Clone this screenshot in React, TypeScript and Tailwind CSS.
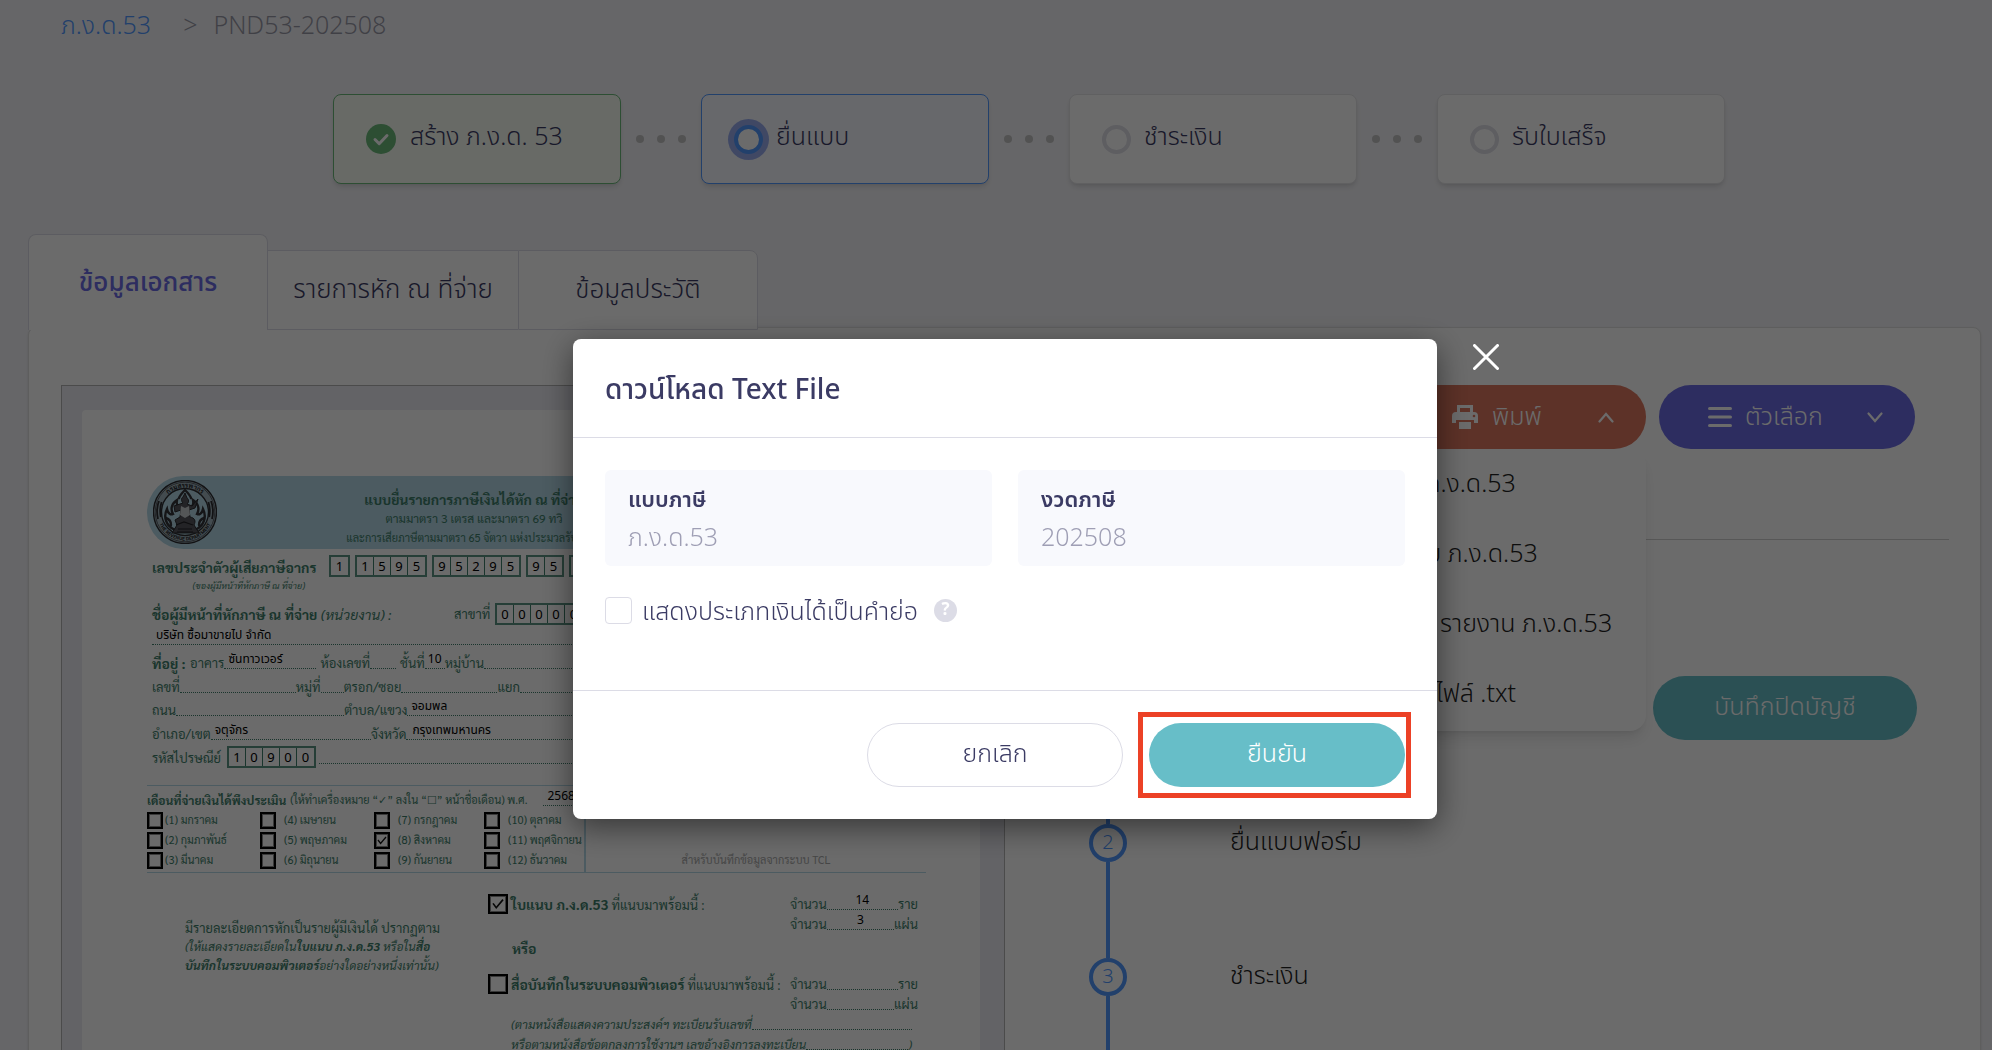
import { ReactNode } from "react";

const steps = [
  { label: "สร้าง ภ.ง.ด. 53", state: "done" },
  { label: "ยื่นแบบ", state: "active" },
  { label: "ชำระเงิน", state: "todo" },
  { label: "รับใบเสร็จ", state: "todo" },
];

const stepStyles: Record<string, string> = {
  done: "border-[#6bb97a] bg-[#f7fcf4]",
  active: "border-[#5198ff] bg-[#f5f8ff]",
  todo: "border-[#e4e4e8] bg-white",
};

const printItems = [
  "แบบ ภ.ง.ด.53",
  "ใบแนบ ภ.ง.ด.53",
  "Excel รายงาน ภ.ง.ด.53",
  "บันทึกไฟล์ .txt",
];

const timeline = ["บันทึกปิดบัญชี", "ยื่นแบบฟอร์ม", "ชำระเงิน"];

const months = [
  ["มกราคม", "กุมภาพันธ์", "มีนาคม"],
  ["เมษายน", "พฤษภาคม", "มิถุนายน"],
  ["กรกฎาคม", "สิงหาคม", "กันยายน"],
  ["ตุลาคม", "พฤศจิกายน", "ธันวาคม"],
];

const monthColumns = ["w-[113px]", "w-[114px]", "w-[110px]", "w-[100px]"];
const monthGaps = ["gap-[2px]", "gap-2", "gap-2", "gap-2"];

function StepIcon({ state }: { state: string }) {
  if (state === "done") {
    return (
      <svg className="ml-8 mr-[14px] size-[30px]" viewBox="0 0 30 30">
        <circle cx="15" cy="15" r="15" fill="#6bb97a" />
        <path
          d="M9 15.5l4.2 4.2L21 11.5"
          fill="none"
          stroke="#fff"
          strokeWidth="3"
          strokeLinecap="round"
          strokeLinejoin="round"
        />
      </svg>
    );
  }
  if (state === "active") {
    return (
      <span className="ml-[26px] mr-[7px] flex size-[41px] items-center justify-center rounded-full bg-[#99acef]">
        <span className="size-[29px] rounded-full border-4 border-[#5198ff] bg-white" />
      </span>
    );
  }
  return (
    <span className="ml-8 mr-[13px] size-[29px] rounded-full border-4 border-[#dfdfe8]" />
  );
}

function Steps() {
  return (
    <div className="flex justify-center pl-[66px] pt-11">
      {steps.map((step, index) => (
        <div key={step.label} className="flex items-center">
          {index > 0 && (
            <div className="flex w-20 justify-center gap-[13px]">
              <span className="size-2 rounded-full bg-[#c3c3c3]" />
              <span className="size-2 rounded-full bg-[#c3c3c3]" />
              <span className="size-2 rounded-full bg-[#c3c3c3]" />
            </div>
          )}
          <div
            className={`flex h-[90px] w-72 items-center rounded-lg border text-[25px] leading-8 text-[#3b3b64] shadow-md ${stepStyles[step.state]}`}
          >
            <StepIcon state={step.state} />
            <span className="pb-1">{step.label}</span>
          </div>
        </div>
      ))}
    </div>
  );
}

function Tabs() {
  return (
    <div className="flex items-end pt-[50px]" role="tablist">
      <button
        role="tab"
        aria-selected="true"
        className="h-24 w-60 rounded-t-lg border border-b-0 border-[#dcdce6] bg-white pt-0.5 text-[26px] font-medium text-[#6b6be4]"
      >
        ข้อมูลเอกสาร
      </button>
      <button
        role="tab"
        aria-selected="false"
        className="h-20 w-[250px] border-y border-[#dcdce6] bg-white text-[26px] text-[#3b3b64]"
      >
        รายการหัก ณ ที่จ่าย
      </button>
      <button
        role="tab"
        aria-selected="false"
        className="h-20 w-60 rounded-tr-lg border border-[#dcdce6] bg-white text-[26px] text-[#3b3b64]"
      >
        ข้อมูลประวัติ
      </button>
    </div>
  );
}

function Emblem() {
  return (
    <svg className="size-16" viewBox="0 0 64 64">
      <defs>
        <path id="ring-top" d="M7.5 32a24.5 24.5 0 0 1 49 0" />
        <path id="ring-bottom" d="M3.5 32a28.5 28.5 0 0 0 57 0" />
      </defs>
      <circle cx="32" cy="32" r="31.5" fill="#9fb4bd" stroke="#2c2c30" strokeWidth="1.4" />
      <circle cx="32" cy="32" r="29.8" fill="none" stroke="#44444a" strokeWidth="0.8" />
      <circle cx="32" cy="32" r="23.5" fill="#b5d9e7" stroke="#2c2c30" strokeWidth="1.4" />
      <g fill="#222226" fontSize="6.5" fontWeight="700" textAnchor="middle">
        <text>
          <textPath href="#ring-top" startOffset="50%">กรมสรรพากร</textPath>
        </text>
        <text fontSize="5">
          <textPath href="#ring-bottom" startOffset="50%">THE REVENUE DEPARTMENT</textPath>
        </text>
      </g>
      <g fill="none" stroke="#2c2c30" strokeWidth="1.8">
        <path d="M6 21c-2 5-2.4 12-1 18M8.6 22c-1.6 5-1.8 10-.8 15" />
        <path d="M58 21c2 5 2.4 12 1 18M55.4 22c1.6 5 1.8 10 .8 15" />
      </g>
      <g fill="none" stroke="#333338" strokeWidth="2.4" strokeLinecap="round">
        <path d="M22 50c-9-4-12-13-8-21 1 5 4 6 6 5-3-5-1-11 4-14-1 5 1 7 3 7" />
        <path d="M42 50c9-4 12-13 8-21-1 5-4 6-6 5 3-5 1-11-4-14 1 5-1 7-3 7" />
        <path d="M13 38c3 1 5 3 5 7M51 38c-3 1-5 3-5 7" />
        <path d="M26 18c1-3 3-5 6-8 3 3 5 5 6 8" />
      </g>
      <path
        d="M32 13l2 5c2 1 2 5 0 6l5 2 6-7-3 9-6 2 1 7c5 1 6 4 4 8l5 8H19l5-8-2-5 5-3 1-7-6 2-1-6 6-2 3-1c-2-2-2-5 0-6z"
        fill="#55555c"
        stroke="#29292d"
      />
      <path d="M28 26l4 2 4-2 1 9-5 3-5-3z" fill="#c9cdd0" />
      <path d="M23 45l8-3 9 3M25 49h14M24 52h16" stroke="#222226" strokeWidth="1.2" fill="none" />
    </svg>
  );
}

function Cells({ value }: { value: string }) {
  return (
    <span className="flex h-[22px] divide-x divide-[#3f7f6c] border-2 border-[#5c9484] font-['Noto_Sans'] text-[13px] leading-[18px] text-black">
      {value.split("").map((digit, index) => (
        <span key={index} className="w-[17px] text-center">
          {digit}
        </span>
      ))}
    </span>
  );
}

function Blank({ className, children }: { className: string; children?: ReactNode }) {
  return (
    <span
      className={`mb-1 h-4 whitespace-nowrap border-b border-dotted border-[#3f7f6c] font-['Noto_Sans_Thai'] text-[12px] leading-3 text-black ${className}`}
    >
      {children}
    </span>
  );
}

function Tick({ label, size, checked }: { label: string; size: string; checked?: boolean }) {
  return (
    <span className="relative flex h-fit shrink-0">
      <input
        type="checkbox"
        aria-label={label}
        checked={checked ?? false}
        readOnly
        className={`appearance-none border-2 border-black outline outline-1 -outline-offset-[3px] outline-[#8b8b8b] ${size}`}
      />
      {checked && (
        <svg className="absolute inset-0 size-full" viewBox="0 0 16 16">
          <path d="M4 7.5l2.6 3.5L12 4.5" fill="none" stroke="#111" strokeWidth="1.3" />
        </svg>
      )}
    </span>
  );
}

function Amounts({ rows, sheets }: { rows?: string; sheets?: string }) {
  return (
    <div className="w-[128px] text-[13px] leading-5">
      <div className="flex items-end">
        จำนวน
        <Blank className="flex-1 text-center">{rows}</Blank>
        ราย
      </div>
      <div className="flex items-end">
        จำนวน
        <Blank className="flex-1 text-center">{sheets}</Blank>
        แผ่น
      </div>
    </div>
  );
}

function TaxForm() {
  return (
    <div className="ml-5 mr-6 mt-6 rounded-t bg-white pl-[65px] pr-[54px] pt-[66px] font-['Sarabun','Noto_Sans_Thai_Looped',sans-serif] text-[13px] font-normal text-[#3f7f6c]">
      <div className="flex h-[73px] rounded-full bg-[#b5d9e7] pl-[6px] pt-1">
        <Emblem />
        <div className="w-[514px] whitespace-nowrap pt-2.5 text-center text-[12px] leading-[19px]">
          <p className="text-[14px] font-bold">แบบยื่นรายการภาษีเงินได้หัก ณ ที่จ่าย</p>
          <p>ตามมาตรา 3 เตรส และมาตรา 69 ทวิ</p>
          <p className="text-[11px]">และการเสียภาษีตามมาตรา 65 จัตวา แห่งประมวลรัษฎากร</p>
        </div>
      </div>

      <div className="flex pl-[5px] pt-[6px]">
        <div className="w-[177px] whitespace-nowrap">
          <p className="text-[14px] font-bold leading-6">เลขประจำตัวผู้เสียภาษีอากร</p>
          <p className="pr-6 text-right text-[9px] italic leading-3">(ของผู้มีหน้าที่หักภาษี ณ ที่จ่าย)</p>
        </div>
        <div className="flex gap-[5px]">
          <Cells value="1" />
          <Cells value="1595" />
          <Cells value="95295" />
          <Cells value="95" />
          <Cells value="9" />
        </div>
      </div>

      <div className="mt-3 flex h-[22px] items-center whitespace-nowrap pl-[5px]">
        <p className="w-[302px] text-[14px]">
          <b>ชื่อผู้มีหน้าที่หักภาษี ณ ที่จ่าย</b> <i>(หน่วยงาน) :</i>
        </p>
        <p className="w-[41px]">สาขาที่</p>
        <Cells value="00000" />
      </div>
      <div className="flex h-6 items-end pl-[5px]">
        <Blank className="flex-1 pl-1">บริษัท ซื้อมาขายไป จำกัด</Blank>
      </div>
      <div className="flex h-6 items-end whitespace-nowrap pl-[5px] leading-5">
        <b className="w-[38px] text-[14px]">ที่อยู่ :</b>
        อาคาร
        <Blank className="mr-1 w-[92px] pl-1">ซันทาวเวอร์</Blank>
        ห้องเลขที่
        <Blank className="mr-1 w-[26px]" />
        ชั้นที่
        <Blank className="w-[20px] text-center">10</Blank>
        หมู่บ้าน
        <Blank className="flex-1" />
      </div>
      <div className="flex h-6 items-end whitespace-nowrap pl-[5px] leading-5">
        เลขที่
        <Blank className="w-[116px]" />
        หมู่ที่
        <Blank className="w-[23px]" />
        ตรอก/ซอย
        <Blank className="w-[96px]" />
        แยก
        <Blank className="flex-1" />
      </div>
      <div className="flex h-[23px] items-end whitespace-nowrap pl-[5px] leading-5">
        ถนน
        <Blank className="w-[168px]" />
        ตำบล/แขวง
        <Blank className="flex-1 pl-1">จอมพล</Blank>
      </div>
      <div className="flex h-6 items-end whitespace-nowrap pl-[5px] leading-5">
        อำเภอ/เขต
        <Blank className="w-[160px] pl-1">จตุจักร</Blank>
        จังหวัด
        <Blank className="flex-1 pl-1.5">กรุงเทพมหานคร</Blank>
      </div>
      <div className="flex h-6 items-end whitespace-nowrap pl-[5px] leading-5">
        <span className="w-[75px]">รหัสไปรษณีย์</span>
        <Cells value="10900" />
        <Blank className="ml-[3px] flex-1" />
      </div>

      <div className="mt-[17px] flex border-y border-[#b5d9e7]">
        <div className="w-[439px] border-r-2 border-[#b5d9e7]">
          <p className="flex h-6 items-end whitespace-nowrap text-[11px] leading-5">
            <b className="text-[12px]">เดือนที่จ่ายเงินได้พึงประเมิน</b>
            <span className="pl-1">(ให้ทำเครื่องหมาย “✓” ลงใน “☐” หน้าชื่อเดือน) พ.ศ.</span>
            <Blank className="ml-4 flex-1 pl-1">2568</Blank>
          </p>
          <div className="flex pb-[2px]">
            {months.map((column, col) => (
              <div key={col} className={monthColumns[col]}>
                {column.map((month, row) => (
                  <div key={month} className={`flex h-5 items-center whitespace-nowrap text-[11px] ${monthGaps[col]}`}>
                    <Tick label={month} size="h-[17px] w-4" checked={month === "สิงหาคม"} />
                    <span>
                      ({col * 3 + row + 1}) {month}
                    </span>
                  </div>
                ))}
              </div>
            ))}
          </div>
        </div>
        <p className="flex-1 self-end pb-1 text-center text-[11px] text-[#a8a8a8]">
          สำหรับบันทึกข้อมูลจากระบบ TCL
        </p>
      </div>

      <div className="flex pt-[21px]">
        <div className="w-[341px] whitespace-nowrap pl-[38px] pt-6 leading-[19px]">
          <p>มีรายละเอียดการหักเป็นรายผู้มีเงินได้ ปรากฏตาม</p>
          <p className="text-[12px] italic">
            (ให้แสดงรายละเอียดใน<b>ใบแนบ ภ.ง.ด.53</b> หรือใน<b>สื่อ</b>
          </p>
          <p className="text-[12px] italic">
            <b>บันทึกในระบบคอมพิวเตอร์</b>อย่างใดอย่างหนึ่งเท่านั้น)
          </p>
        </div>
        <div className="flex-1 whitespace-nowrap">
          <div className="flex">
            <Tick label="ใบแนบ ภ.ง.ด.53" size="size-5" checked />
            <p className="w-[282px] pl-[3px] leading-5">
              <b className="text-[14px]">ใบแนบ ภ.ง.ด.53</b> ที่แนบมาพร้อมนี้ :
            </p>
            <Amounts rows="14" sheets="3" />
          </div>
          <p className="h-10 pl-6 pt-1 text-[14px] font-bold">หรือ</p>
          <div className="flex">
            <Tick label="สื่อบันทึกในระบบคอมพิวเตอร์" size="size-5" />
            <p className="w-[282px] pl-[3px] leading-5">
              <b className="text-[14px]">สื่อบันทึกในระบบคอมพิวเตอร์</b> ที่แนบมาพร้อมนี้ :
            </p>
            <Amounts />
          </div>
          <div className="pl-[23px] pr-[14px] text-[12px] italic leading-5">
            <p className="flex items-end">
              (ตามหนังสือแสดงความประสงค์ฯ ทะเบียนรับเลขที่
              <Blank className="flex-1" />
            </p>
            <p className="flex items-end">
              หรือตามหนังสือข้อตกลงการใช้งานฯ เลขอ้างอิงการลงทะเบียน
              <Blank className="flex-1" />)
            </p>
          </div>
        </div>
      </div>
    </div>
  );
}

function PrintMenu() {
  return (
    <div className="relative">
      <button className="flex h-16 w-64 items-center rounded-full bg-[#dd775f] pl-[62px] text-[25px] text-white">
        <svg className="mr-[14px] h-6 w-[26px]" viewBox="0 0 26 24" fill="#fff">
          <path d="M5 0h16v7h-3V3H8v4H5zM4 7h18a4 4 0 0 1 4 4v7h-4v-3H4v3H0v-7a4 4 0 0 1 4-4zM7 17h12v7H7z" />
          <circle cx="22" cy="11" r="1.3" fill="#dd775f" />
        </svg>
        <span className="pt-0.5">พิมพ์</span>
        <svg className="ml-auto mr-8 h-[11px] w-4" viewBox="0 0 16 11">
          <path d="M1.5 9.5L8 2l6.5 7.5" fill="none" stroke="#fff" strokeWidth="2.2" strokeLinecap="round" />
        </svg>
      </button>
      <div className="absolute right-0 top-full flex h-[282px] w-[304px] flex-col rounded-2xl bg-white pt-px shadow-lg">
        {printItems.map((item) => (
          <button key={item} className="h-[70px] shrink-0 whitespace-nowrap pl-[34px] text-left text-[25px] text-[#222]">
            {item}
          </button>
        ))}
      </div>
    </div>
  );
}

function OptionsButton() {
  return (
    <button className="flex h-16 w-64 items-center rounded-full bg-[#6b6be4] pl-[49px] text-[25px] text-white">
      <svg className="mr-[13px] h-5 w-6" viewBox="0 0 24 20">
        <path d="M1.5 1.5h21M1.5 10h21M1.5 18.5h21" stroke="#fff" strokeWidth="3" strokeLinecap="round" />
      </svg>
      <span className="pt-0.5">ตัวเลือก</span>
      <svg className="ml-auto mr-8 h-[11px] w-4" viewBox="0 0 16 11">
        <path d="M1.5 1.5L8 9l6.5-7.5" fill="none" stroke="#fff" strokeWidth="2.2" strokeLinecap="round" />
      </svg>
    </button>
  );
}

function ActionPanel() {
  return (
    <div>
      <div className="flex justify-end gap-[13px] border-b border-[#cfcfcf] pb-[90px] pr-[34px]">
        <PrintMenu />
        <OptionsButton />
      </div>
      <ol className="pl-[84px] pr-8 pt-[150px]">
        {timeline.map((label, index) => (
          <li key={label} className="flex h-[134px]">
            <div className="flex flex-col items-center">
              <span className="flex size-[38px] shrink-0 items-center justify-center rounded-full border-4 border-[#5198ff] pb-px text-xl text-[#5198ff]">
                {index + 1}
              </span>
              <span className="w-1 flex-1 bg-[#5198ff]" />
            </div>
            <div className="h-[134px] flex-1 pl-[103px] text-[25px] leading-9 text-[#222]">
              {index > 0 && label}
              {index === 0 && (
                <button className="-mt-[14px] ml-auto block h-16 w-66 rounded-full bg-[#67bec8] pb-0.5 text-[25px] text-white">
                  {label}
                </button>
              )}
            </div>
          </li>
        ))}
      </ol>
    </div>
  );
}

function Field({ label, value }: { label: string; value: string }) {
  return (
    <div className="h-24 flex-1 rounded-md bg-[#f8f9fd] px-[23px] pt-3">
      <p className="text-[22px] font-semibold leading-[38px]">{label}</p>
      <p className="text-[25px] leading-9 text-[#9f9fb5]">{value}</p>
    </div>
  );
}

function DownloadModal() {
  return (
    <div className="fixed inset-0 flex items-start justify-center bg-black/58 pl-[18px] pt-[339px]">
      <div
        role="dialog"
        aria-labelledby="modal-title"
        className="relative w-[864px] rounded-lg bg-white text-[#3b3b64] shadow-[0_8px_32px_rgba(0,0,0,0.5)]"
      >
        <h2
          id="modal-title"
          className="flex h-[99px] items-center border-b border-[#dcdce6] px-8 pt-1.5 text-[28px] font-medium"
        >
          ดาวน์โหลด Text File
        </h2>
        <div className="h-[252px] px-8 pt-8">
          <div className="flex gap-[26px]">
            <Field label="แบบภาษี" value="ภ.ง.ด.53" />
            <Field label="งวดภาษี" value="202508" />
          </div>
          <div className="flex items-center pt-[22px]">
            <label className="flex items-center gap-[10px] text-[25px] leading-10">
              <input
                type="checkbox"
                className="size-[27px] appearance-none rounded border border-[#dcdce6]"
              />
              <span className="pt-1">แสดงประเภทเงินได้เป็นคำย่อ</span>
            </label>
            <span className="ml-4 flex size-[23px] items-center justify-center rounded-full bg-[#dcdce6] pt-0.5 text-[17px] font-bold text-white">
              ?
            </span>
          </div>
        </div>
        <div className="flex justify-end gap-[26px] border-t border-[#dcdce6] px-8 py-8">
          <button className="h-16 w-64 rounded-full border border-[#dcdce6] text-[25px]">
            ยกเลิก
          </button>
          <div className="relative">
            <button className="h-16 w-64 rounded-full bg-[#67bec8] text-[25px] text-white">
              ยืนยัน
            </button>
            <span className="pointer-events-none absolute -bottom-[11px] -left-[11px] -right-[6px] -top-[11px] border-5 border-[#ec4126]" />
          </div>
        </div>
        <button aria-label="ปิด" className="absolute left-full top-[5px] ml-9">
          <svg className="size-[26px]" viewBox="0 0 26 26">
            <path d="M1.5 1.5l23 23M24.5 1.5l-23 23" stroke="#fff" strokeWidth="3" strokeLinecap="round" />
          </svg>
        </button>
      </div>
    </div>
  );
}

export default function App() {
  return (
    <div className="h-screen overflow-hidden bg-[#f4f4f8] font-['Noto_Sans_Thai','Noto_Sans',sans-serif] font-[350]">
      <nav className="flex h-[50px] items-center pl-[61px] pt-1 text-[25px]">
        <a href="#" className="text-[#5198ff]">
          ภ.ง.ด.53
        </a>
        <span className="pl-8 text-[#9a9aa8]">&gt;</span>
        <span className="pl-4 text-[#9a9aa8]">PND53-202508</span>
      </nav>
      <Steps />
      <main className="pl-7 pr-[11px]">
        <Tabs />
        <div className="-mt-[3px] grid grid-cols-2 rounded-lg border border-[#e0e0e0] bg-white pl-8 pr-[31px] pt-[57px] shadow">
          <div className="h-[720px] overflow-hidden border border-[#b4b4b4] bg-[#ebebf2]">
            <TaxForm />
          </div>
          <ActionPanel />
        </div>
      </main>
      <DownloadModal />
    </div>
  );
}
